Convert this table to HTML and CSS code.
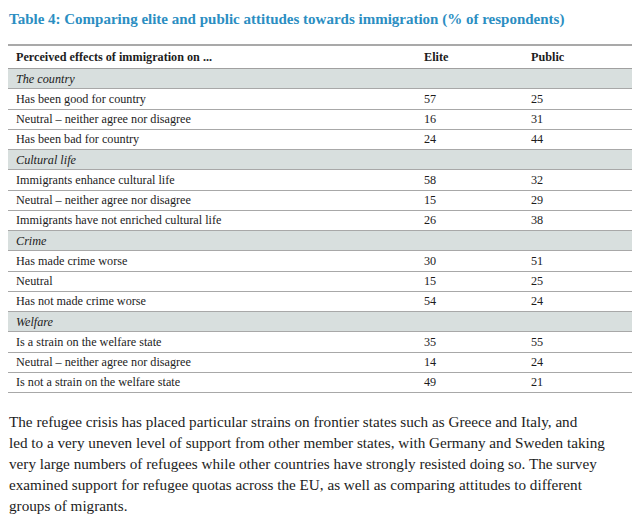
FILE: index.html
```html
<!DOCTYPE html>
<html>
<head>
<meta charset="utf-8">
<link rel="stylesheet" href="styles.css">
</head>
<body>
<div class="page">
  <h1 class="title">Table 4: Comparing elite and public attitudes towards immigration (% of respondents)</h1>
  <table class="data">
    <thead>
      <tr><th class="c1">Perceived effects of immigration on ...</th><th class="c2">Elite</th><th class="c3">Public</th></tr>
    </thead>
    <tbody>
      <tr class="cat"><td colspan="3">The country</td></tr>
      <tr><td>Has been good for country</td><td>57</td><td>25</td></tr>
      <tr><td>Neutral – neither agree nor disagree</td><td>16</td><td>31</td></tr>
      <tr><td>Has been bad for country</td><td>24</td><td>44</td></tr>
      <tr class="cat"><td colspan="3">Cultural life</td></tr>
      <tr><td>Immigrants enhance cultural life</td><td>58</td><td>32</td></tr>
      <tr><td>Neutral – neither agree nor disagree</td><td>15</td><td>29</td></tr>
      <tr><td>Immigrants have not enriched cultural life</td><td>26</td><td>38</td></tr>
      <tr class="cat"><td colspan="3">Crime</td></tr>
      <tr><td>Has made crime worse</td><td>30</td><td>51</td></tr>
      <tr><td>Neutral</td><td>15</td><td>25</td></tr>
      <tr><td>Has not made crime worse</td><td>54</td><td>24</td></tr>
      <tr class="cat"><td colspan="3">Welfare</td></tr>
      <tr><td>Is a strain on the welfare state</td><td>35</td><td>55</td></tr>
      <tr><td>Neutral – neither agree nor disagree</td><td>14</td><td>24</td></tr>
      <tr><td>Is not a strain on the welfare state</td><td>49</td><td>21</td></tr>
    </tbody>
  </table>
  <p class="body">The refugee crisis has placed particular strains on frontier states such as Greece and Italy, and<br>led to a very uneven level of support from other member states, with Germany and Sweden taking very large numbers of refugees while other countries have strongly resisted doing so. The survey examined support for refugee quotas across the EU, as well as comparing attitudes to different groups of migrants.</p>
</div>
</body>
</html>
```

FILE: styles.css
```css
html, body {
  margin: 0;
  padding: 0;
  background: #ffffff;
}
.page {
  padding: 9px 8px 0 8px;
  font-family: "Liberation Serif", "Times New Roman", serif;
  color: #1c1c1c;
}
.title {
  margin: 0;
  padding: 0 0 0 1px;
  font-size: 15px;
  font-weight: bold;
  color: #2b8ec2;
  line-height: 20px;
  height: 35px;
}
.data {
  width: 624px;
  border-collapse: collapse;
  font-size: 12.2px;
  border-top: 2px solid #a9a9a9;
  border-bottom: 1px solid #a0a0a0;
}
.data th, .data td {
  text-align: left;
  padding: 0 0 0 8px;
  border-bottom: 1px solid #a8a8a8;
  height: 19.25px;
  line-height: 14px;
}
.data th {
  height: 22px;
  font-weight: bold;
  border-bottom: 1px solid #a0a0a0;
}
.c1 { width: 400px; }
.c2 { width: 99px; }
.data .cat td {
  background: #d8dfde;
  font-style: italic;
}
.body {
  margin: 18px 0 0 1px;
  font-size: 15.2px;
  line-height: 21px;
  color: #1c1c1c;
  width: 610px;
}
```
